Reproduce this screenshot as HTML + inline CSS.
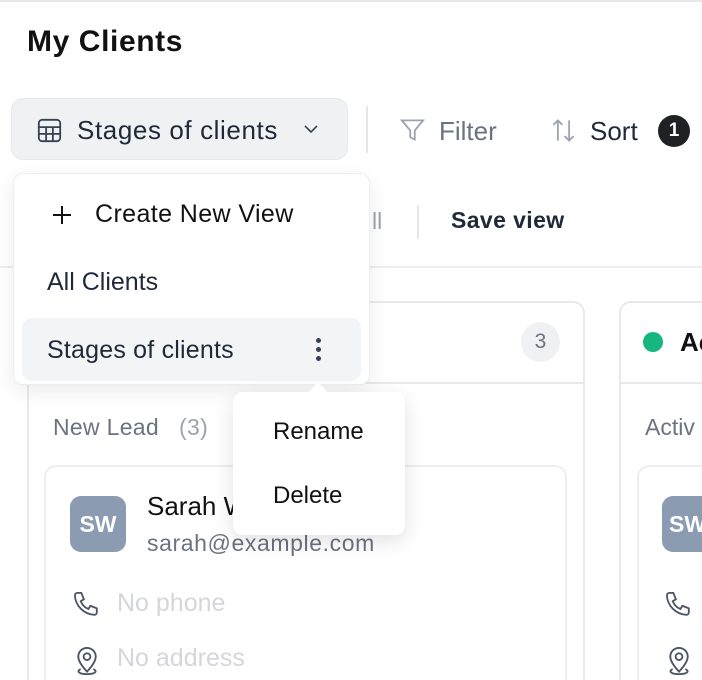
<!DOCTYPE html><html style="width:702px;height:680px;overflow:hidden"><head><style>
*{box-sizing:border-box;margin:0;padding:0}
body{width:702px;height:680px;overflow:hidden;background:#fff;font-family:"Liberation Sans",sans-serif;position:relative;color:#111}
.a{position:absolute;white-space:nowrap}
</style></head><body>
<div class="a" style="left:0;top:0;width:702px;height:2px;background:#e5e7eb"></div>
<div class="a" style="left:27px;top:25px;font-size:30px;font-weight:600;color:#111;letter-spacing:0.6px">My Clients</div>
<div class="a" style="left:11px;top:98px;width:337px;height:62px;background:#f0f1f3;border:1px solid #e8e9ec;border-radius:12px"></div>
<svg class="a" style="left:36px;top:117px" width="27" height="27" viewBox="0 0 24 24" fill="none" stroke="#374151" stroke-width="1.6"><rect x="2.5" y="2.5" width="19" height="19" rx="3"/><path d="M2.5 9h19M2.5 15h19M9 9v12.5M15 9v12.5"/></svg>
<div class="a" style="left:77px;top:115px;font-size:26px;color:#1f2937;letter-spacing:0.6px">Stages of clients</div>
<svg class="a" style="left:302px;top:122px" width="18" height="14" viewBox="0 0 18 14" fill="none" stroke="#374151" stroke-width="1.6"><path d="M3 4l6 6 6-6"/></svg>
<div class="a" style="left:366px;top:106px;width:2px;height:47px;background:#e5e7eb"></div>
<svg class="a" style="left:399px;top:117px" width="27" height="27" viewBox="0 0 24 24" fill="none" stroke="#9ca3af" stroke-width="1.6"><path d="M2.5 3h19l-7.5 9v8l-4-2v-6z"/></svg>
<div class="a" style="left:439px;top:116px;font-size:26px;color:#6b7280">Filter</div>
<svg class="a" style="left:550px;top:117px" width="27" height="27" viewBox="0 0 24 24" fill="none" stroke="#9ca3af" stroke-width="1.6"><path d="M7 21V3M3 7l4-4 4 4M17 3v18M13 17l4 4 4-4"/></svg>
<div class="a" style="left:590px;top:116px;font-size:26px;color:#1f2937">Sort</div>
<div class="a" style="left:658px;top:115px;width:32px;height:32px;border-radius:50%;background:#1f2125;color:#fff;font-size:19px;font-weight:700;text-align:center;line-height:32px">1</div>
<div class="a" style="left:372px;top:208px;font-size:23px;color:#9ca3af">ll</div>
<div class="a" style="left:417px;top:205px;width:2px;height:34px;background:#e5e7eb"></div>
<div class="a" style="left:451px;top:207px;font-size:23px;font-weight:600;color:#1f2937;letter-spacing:0.4px">Save view</div>
<div class="a" style="left:0;top:266px;width:702px;height:2px;background:#eceef0"></div>
<!-- column 1 -->
<div class="a" style="left:27px;top:301px;width:558px;height:379px;border:2px solid #e8e9ec;border-bottom:none;border-radius:12px 12px 0 0"></div>
<div class="a" style="left:27px;top:382px;width:558px;height:2px;background:#e8e9ec"></div>
<div class="a" style="left:521px;top:322px;width:39px;height:40px;border-radius:50%;background:#f0f1f3;color:#6b7280;font-size:21px;text-align:center;line-height:40px">3</div>
<div class="a" style="left:53px;top:414px;font-size:23px;color:#6b7280;letter-spacing:0.3px">New Lead&nbsp;&nbsp; <span style="color:#9ca3af">(3)</span></div>
<div class="a" style="left:44px;top:465px;width:523px;height:215px;border:2px solid #eceef0;border-bottom:none;border-radius:12px 12px 0 0"></div>
<div class="a" style="left:70px;top:496px;width:56px;height:56px;border-radius:11px;background:#8a9bb2;color:#fff;font-size:23px;font-weight:600;text-align:center;line-height:56px">SW</div>
<div class="a" style="left:147px;top:491px;font-size:26px;color:#111">Sarah W</div>
<div class="a" style="left:147px;top:530px;font-size:23px;color:#6b7280;letter-spacing:0.6px">sarah@example.com</div>
<svg class="a" style="left:71px;top:589px" width="31" height="31" viewBox="0 0 24 24" fill="none" stroke="#4b5563" stroke-width="1.4"><path d="M5 3h3l2 5-2.5 1.5a11 11 0 0 0 6 6L15 13l5 2v3a2 2 0 0 1-2 2A16 16 0 0 1 3 5a2 2 0 0 1 2-2z"/></svg>
<div class="a" style="left:117px;top:589px;font-size:25px;color:#d4d6da">No phone</div>
<svg class="a" style="left:72px;top:644px" width="30" height="34" viewBox="0 0 24 27" fill="none" stroke="#4b5563" stroke-width="1.5"><path d="M12 22s-7-7-7-12a7 7 0 0 1 14 0c0 5-7 12-7 12z"/><circle cx="12" cy="10" r="2.7"/><path d="M7 20c-3 1-3 4 5 4s8-3 5-4"/></svg>
<div class="a" style="left:117px;top:644px;font-size:25px;color:#d4d6da">No address</div>
<!-- column 2 -->
<div class="a" style="left:619px;top:301px;width:83px;height:379px;border:2px solid #e8e9ec;border-right:none;border-bottom:none;border-radius:12px 0 0 0"></div>
<div class="a" style="left:619px;top:382px;width:83px;height:2px;background:#e8e9ec"></div>
<div class="a" style="left:643px;top:332px;width:20px;height:20px;border-radius:50%;background:#16b67f"></div>
<div class="a" style="left:680px;top:327px;font-size:26px;font-weight:600;color:#111">Ac</div>
<div class="a" style="left:645px;top:414px;font-size:23px;color:#6b7280">Activ</div>
<div class="a" style="left:637px;top:465px;width:65px;height:215px;border:2px solid #eceef0;border-right:none;border-bottom:none;border-radius:12px 0 0 0"></div>
<div class="a" style="left:662px;top:496px;width:40px;height:56px;border-radius:11px 0 0 11px;background:#8a9bb2;color:#fff;font-size:23px;font-weight:600;line-height:56px;padding-left:7px;overflow:hidden">SW</div>
<svg class="a" style="left:663px;top:589px" width="31" height="31" viewBox="0 0 24 24" fill="none" stroke="#4b5563" stroke-width="1.4"><path d="M5 3h3l2 5-2.5 1.5a11 11 0 0 0 6 6L15 13l5 2v3a2 2 0 0 1-2 2A16 16 0 0 1 3 5a2 2 0 0 1 2-2z"/></svg>
<svg class="a" style="left:664px;top:644px" width="30" height="34" viewBox="0 0 24 27" fill="none" stroke="#4b5563" stroke-width="1.5"><path d="M12 22s-7-7-7-12a7 7 0 0 1 14 0c0 5-7 12-7 12z"/><circle cx="12" cy="10" r="2.7"/><path d="M7 20c-3 1-3 4 5 4s8-3 5-4"/></svg>
<!-- dropdown -->
<div class="a" style="left:13px;top:173px;width:357px;height:212px;background:#fff;border:1px solid #eceef0;border-radius:10px;box-shadow:0 6px 20px rgba(0,0,0,.08)"></div>
<svg class="a" style="left:50px;top:203px" width="24" height="24" viewBox="0 0 24 24" stroke="#111" stroke-width="2"><path d="M12 3v18M3 12h18"/></svg>
<div class="a" style="left:95px;top:200px;font-size:25px;color:#111;letter-spacing:0.4px">Create New View</div>
<div class="a" style="left:47px;top:268px;font-size:25px;color:#1f2937">All Clients</div>
<div class="a" style="left:22px;top:318px;width:339px;height:63px;background:#f3f4f6;border-radius:10px"></div>
<div class="a" style="left:47px;top:336px;font-size:25px;color:#1f2937;letter-spacing:0.2px">Stages of clients</div>
<div class="a" style="left:316px;top:338px;width:5px;height:5px;border-radius:50%;background:#374151;box-shadow:0 9px 0 #374151,0 18px 0 #374151"></div>
<!-- context menu -->
<div class="a" style="left:233px;top:392px;width:172px;height:143px;background:#fff;border-radius:10px;box-shadow:0 6px 20px rgba(0,0,0,.12)"></div>
<div class="a" style="left:309px;top:382px;width:0;height:0;border-left:9px solid transparent;border-right:9px solid transparent;border-bottom:10px solid #fff"></div>
<div class="a" style="left:273px;top:418px;font-size:24px;color:#111">Rename</div>
<div class="a" style="left:273px;top:482px;font-size:24px;color:#111">Delete</div>
</body></html>
